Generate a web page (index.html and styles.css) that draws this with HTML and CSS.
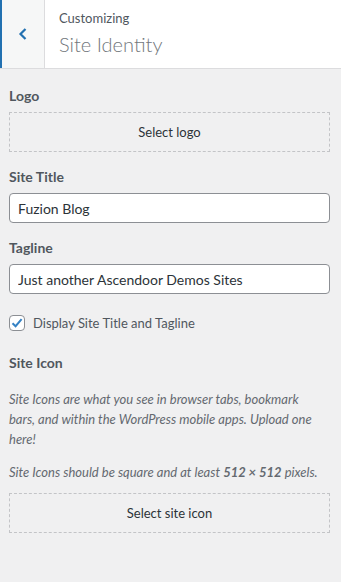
FILE: index.html
```html
<html>
<head>
  <link rel="stylesheet" href="styles.css">
</head>
<body>
  <div class="panel-header">
    <div class="back-button">
      <svg width="20" height="20" viewBox="0 0 20 20"><path d="M12.5 5 L7.5 10 L12.5 15" fill="none" stroke="#2271b1" stroke-width="2.2"/></svg>
    </div>
    <div class="panel-title">
      <span class="customizing">Customizing</span>
      <h3>Site Identity</h3>
    </div>
  </div>
  <div class="controls">
    <div class="control">
      <span class="control-title">Logo</span>
      <div class="upload-button">Select logo</div>
    </div>
    <div class="control">
      <span class="control-title">Site Title</span>
      <input type="text" class="text-input" value="Fuzion Blog">
    </div>
    <div class="control">
      <span class="control-title">Tagline</span>
      <input type="text" class="text-input" value="Just another Ascendoor Demos Sites">
    </div>
    <label class="checkbox-row">
      <span class="checkbox">
        <svg width="14" height="14" viewBox="0 0 14 14"><path d="M2.5 7.2 L5.6 10.2 L11.6 3.2" fill="none" stroke="#3582c4" stroke-width="2"/></svg>
      </span>
      Display Site Title and Tagline
    </label>
    <div class="control">
      <span class="control-title icon-title">Site Icon</span>
      <p class="description">Site Icons are what you see in browser tabs, bookmark bars, and within the WordPress mobile apps. Upload one here!</p>
      <p class="description last">Site Icons should be square and at least <strong>512 × 512</strong> pixels.</p>
      <div class="upload-button">Select site icon</div>
    </div>
  </div>
</body>
</html>
```

FILE: styles.css
```css
body {
  margin: 0;
  font-family: Lato, "Noto Sans", sans-serif;
  font-size: 13px;
  color: #50575e;
  background-color: #f0f0f1;
}
.panel-header {
  display: flex;
  height: 68px;
  background-color: white;
  border-bottom: 1px solid #dcdcde;
}
.back-button {
  width: 42px;
  display: flex;
  align-items: center;
  justify-content: center;
  background-color: #f6f7f7;
  border-left: 2px solid #2271b1;
  border-right: 1px solid #dcdcde;
}
.panel-title {
  padding: 9px 0 0 14px;
}
.customizing {
  display: block;
  font-size: 13px;
  color: #50575e;
  line-height: 18px;
}
.panel-title h3 {
  margin: 4px 0 0;
  font-size: 20px;
  font-weight: 300;
  line-height: 26px;
  color: #72777c;
}
.controls {
  padding: 17px 11px 0 9px;
}
.control {
  margin-bottom: 15px;
}
.control-title {
  display: block;
  font-size: 14px;
  font-weight: 700;
  line-height: 20px;
  margin-bottom: 6px;
}
.icon-title {
  margin-bottom: 16px;
}
.upload-button {
  height: 38px;
  border: 1px dashed #c3c4c7;
  display: flex;
  align-items: center;
  justify-content: center;
  font-size: 13px;
  color: #2c3338;
}
.text-input {
  display: block;
  width: 100%;
  box-sizing: border-box;
  height: 30px;
  padding: 0 8px;
  border: 1px solid #8c8f94;
  border-radius: 4px;
  background: white;
  font-family: inherit;
  font-size: 14px;
  color: #2c3338;
}
.checkbox-row {
  display: flex;
  align-items: center;
  gap: 8px;
  font-size: 13px;
  margin: 21px 0 22px;
}
.checkbox {
  width: 14px;
  height: 14px;
  border: 1px solid #8c8f94;
  border-radius: 4px;
  background: white;
  display: flex;
  align-items: center;
  justify-content: center;
}
.description {
  margin: 0 0 13px;
  padding-right: 6px;
  font-style: italic;
  line-height: 20px;
  color: #646970;
}
.description.last {
  margin-bottom: 11px;
}
.description strong {
  font-weight: 700;
}
```
